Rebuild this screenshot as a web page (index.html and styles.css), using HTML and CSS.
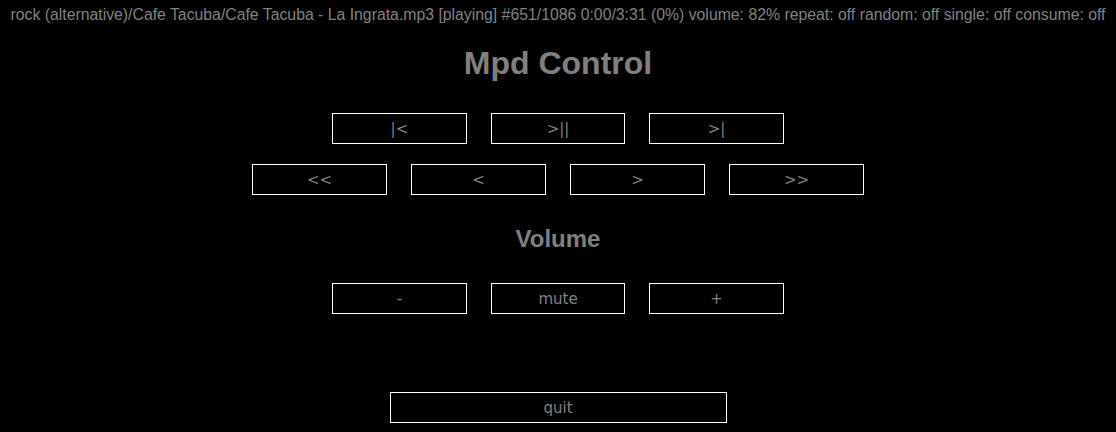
FILE: index.html
```html
<!DOCTYPE html>
<html>
<head>
<meta charset="utf-8">
<title>Mpd Control</title>
<link rel="stylesheet" href="styles.css">
</head>
<body>
<div class="status">rock (alternative)/Cafe Tacuba/Cafe Tacuba - La Ingrata.mp3 [playing] #651/1086 0:00/3:31 (0%) volume: 82% repeat: off random: off single: off consume: off</div>
<h1 class="title">Mpd Control</h1>
<div class="row row-first">
  <button class="btn">|&lt;</button>
  <button class="btn">&gt;||</button>
  <button class="btn">&gt;|</button>
</div>
<div class="row row-second">
  <button class="btn">&lt;&lt;</button>
  <button class="btn">&lt;</button>
  <button class="btn">&gt;</button>
  <button class="btn">&gt;&gt;</button>
</div>
<h2 class="subtitle">Volume</h2>
<div class="row">
  <button class="btn">-</button>
  <button class="btn">mute</button>
  <button class="btn">+</button>
</div>
<div class="row row-quit">
  <button class="btn btn-wide">quit</button>
</div>
</body>
</html>
```
FILE: styles.css
```css
html, body {
  margin: 0;
  padding: 0;
  background: #000;
}
body {
  color: #808080;
  font-family: "Liberation Sans", Arial, sans-serif;
  width: 1116px;
  height: 432px;
  overflow: hidden;
}
.status {
  padding-top: 5px;
  font-size: 15.8px;
  line-height: 19px;
  text-align: center;
  white-space: nowrap;
}
.title {
  margin: 21px 0 0;
  font-size: 32px;
  line-height: 37px;
  text-align: center;
  font-weight: bold;
}
.subtitle {
  margin: 30px 0 0;
  font-size: 24px;
  line-height: 28px;
  text-align: center;
  font-weight: bold;
}
.row {
  display: flex;
  justify-content: center;
  gap: 24px;
  margin-top: 30px;
}
.row-first {
  margin-top: 31px;
}
.row-second {
  margin-top: 20px;
}
.row-quit {
  margin-top: 78px;
}
.btn {
  box-sizing: border-box;
  width: 134.6px;
  height: 31px;
  margin: 0;
  padding: 1px 0 0;
  background: #000;
  border: 1px solid #fff;
  color: #808080;
  font-family: "DejaVu Sans", sans-serif;
  font-size: 15px;
  line-height: 28px;
}
.row-second .btn {
  width: 135px;
}
.btn-wide {
  width: 337px;
}
```
